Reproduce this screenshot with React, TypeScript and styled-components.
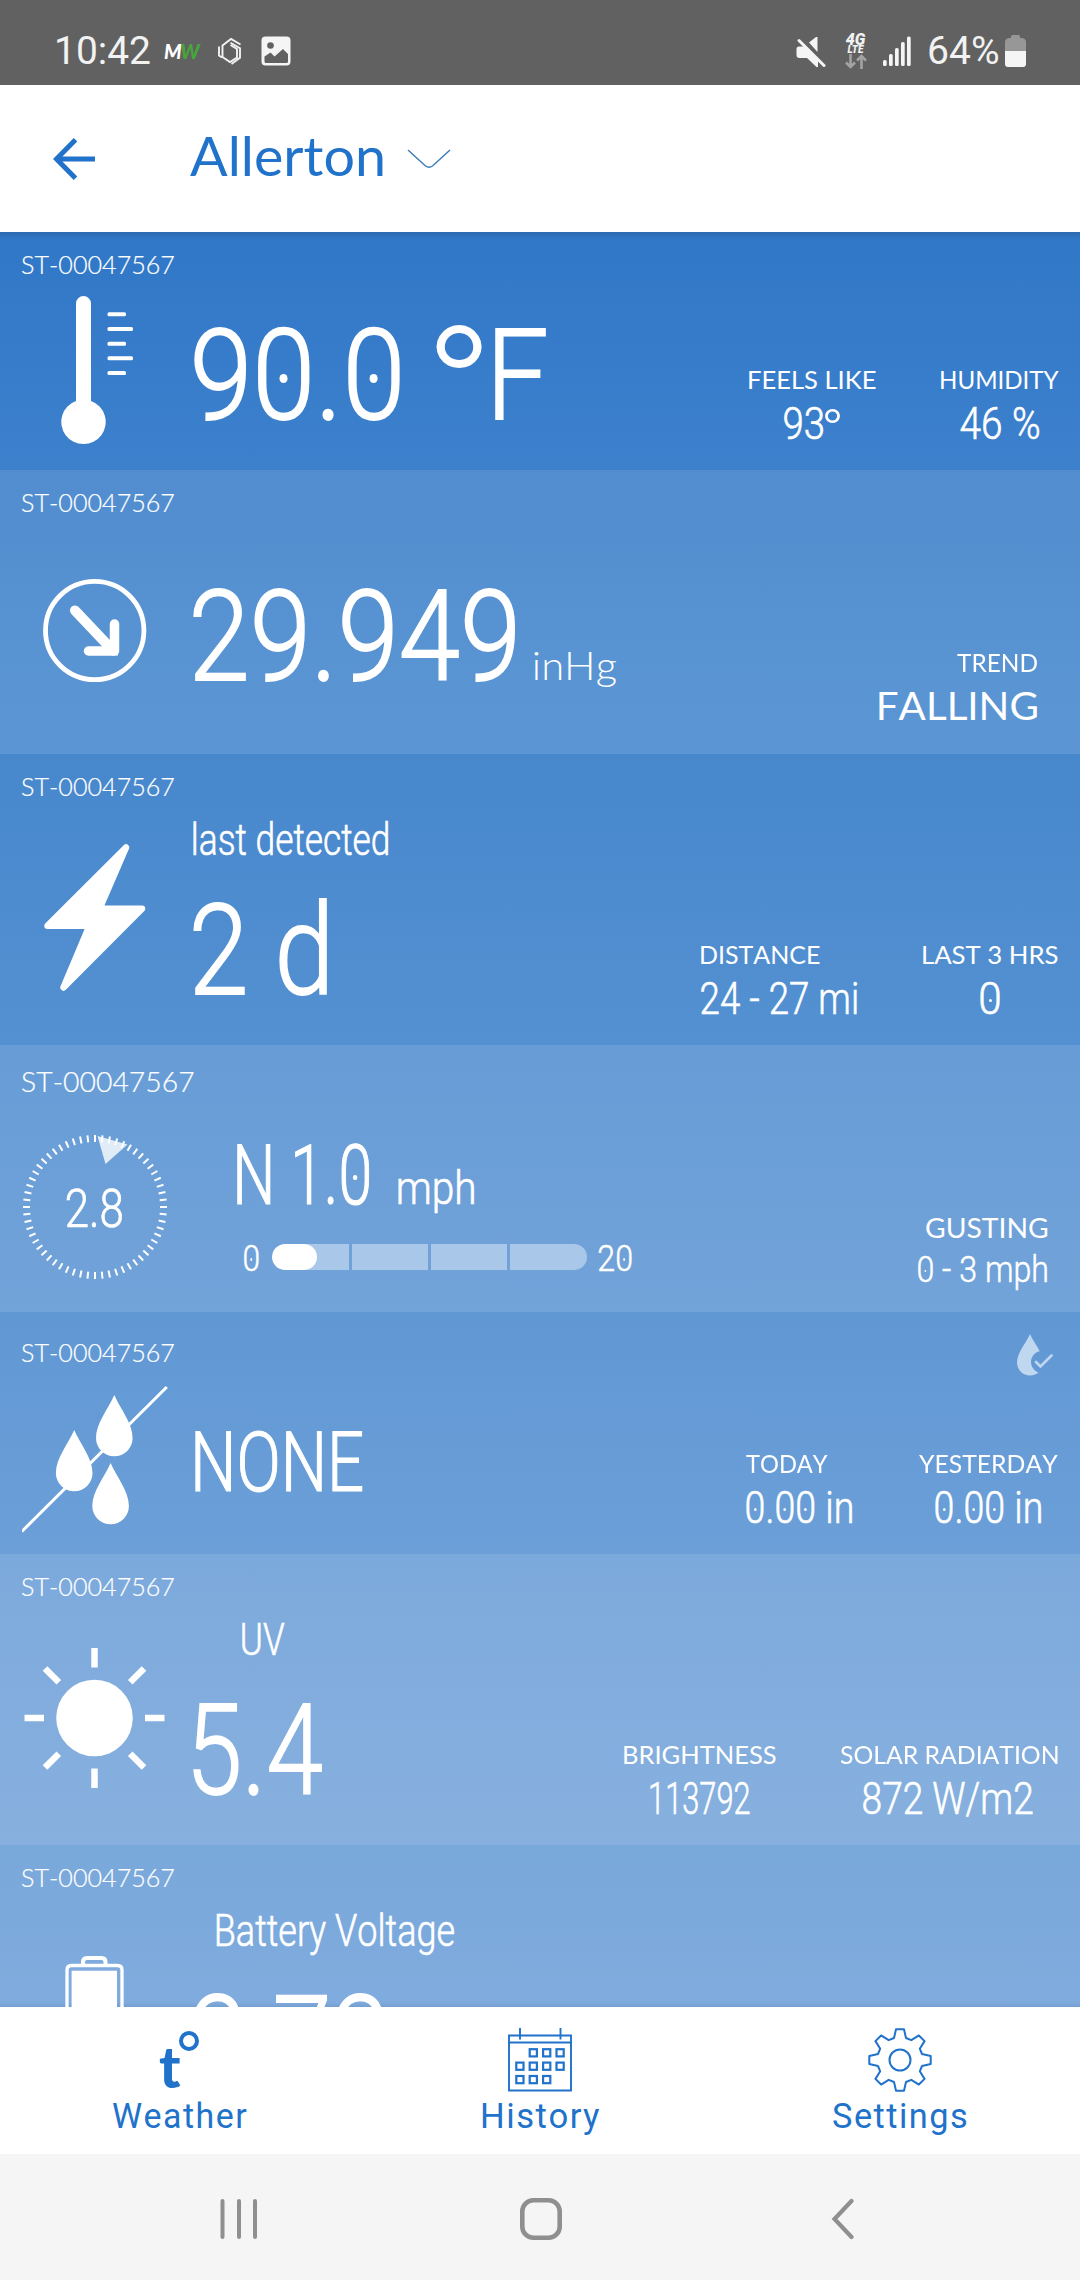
import React, { useLayoutEffect, useState } from 'react';
import styled, { createGlobalStyle } from 'styled-components';

const BLUE = '#2072ca';
const NARROW = "Roboto, 'Liberation Sans', sans-serif";
const WIDE = "Lato, 'Open Sans', 'Liberation Sans', sans-serif";

const GlobalStyle = createGlobalStyle`
  *, *::before, *::after { box-sizing: border-box; }
  body { margin: 0; background: #fff; font-family: ${NARROW}; }
`;

/* ---------- text set to an exact ink width ---------- */

const InkBox = styled.div<{
  $size: number;
  $width: number;
  $weight: number;
  $family: string;
  $color?: string;
  $track: number;
  $swell: number;
}>`
  flex: none;
  width: ${(p) => p.$width}px;
  height: ${(p) => p.$size}px;
  line-height: ${(p) => p.$size}px;
  font-family: ${(p) => p.$family};
  font-size: ${(p) => p.$size}px;
  font-weight: ${(p) => p.$weight};
  letter-spacing: ${(p) => p.$track}px;
  color: ${(p) => p.$color || 'inherit'};
  white-space: nowrap;
  -webkit-text-stroke: ${(p) => p.$swell}em currentColor;
`;

const InkRun = styled.span`
  display: inline-block;
  transform-origin: 0 50%;
  font-kerning: none;
`;

const Zero = styled.span`
  position: relative;
  &::after {
    content: '';
    position: absolute;
    left: 50%;
    top: 50%;
    width: max(0.07em, 2px);
    height: max(0.07em, 2px);
    margin: -0.01em 0 0 -0.035em;
    border-radius: 50%;
    background: currentColor;
  }
`;

type InkProps = {
  text: string;
  width: number;
  size: number;
  weight?: number;
  family?: string;
  color?: string;
  track?: number;
  swell?: number;
  dotted?: boolean;
};

function Ink({ text, width, size, weight = 300, family = NARROW, color, track = 0, swell = 0, dotted }: InkProps) {
  const [fit, setFit] = useState({ scale: 1, shift: 0 });
  useLayoutEffect(() => {
    const ctx = document.createElement('canvas').getContext('2d');
    if (!ctx) return;
    ctx.font = `${weight} ${size}px ${family}`;
    (ctx as any).fontKerning = 'none';
    const m = ctx.measureText(text);
    const edge = (swell * size) / 2;
    const left = -m.actualBoundingBoxLeft - edge;
    const right = m.actualBoundingBoxRight + edge + track * (text.length - 1);
    const scale = width / (right - left);
    setFit({ scale, shift: -left * scale });
  }, [text, width, size, weight, family, track, swell]);
  return (
    <InkBox $size={size} $width={width} $weight={weight} $family={family} $color={color} $track={track} $swell={swell}>
      <InkRun style={{ transform: `translateX(${fit.shift}px) scaleX(${fit.scale})` }}>
        {dotted
          ? text.split('').map((c, i) => (c === '0' ? <Zero key={i}>0</Zero> : c))
          : text}
      </InkRun>
    </InkBox>
  );
}

/* ---------- page frame ---------- */

const Screen = styled.div`
  width: 1080px;
  height: 2280px;
  display: flex;
  flex-direction: column;
  overflow: hidden;
`;

const StatusBar = styled.div`
  flex: none;
  height: 85px;
  padding: 17px 54px 0 57px;
  display: flex;
  align-items: center;
  justify-content: space-between;
  background: #616161;
  color: #f2f2f2;
`;

const StatusGroup = styled.div<{ $gap: number }>`
  display: flex;
  align-items: center;
  gap: ${(p) => p.$gap}px;
`;

const Brand = styled.div`
  width: 37px;
  margin: 0 -2px 0 -5px;
  font: italic 900 20px/22px ${WIDE};
  letter-spacing: -1.5px;
  color: #fff;
  em { color: #46a63c; }
`;

const Network = styled.div`
  width: 23px;
  height: 35px;
  margin-right: -2px;
  display: flex;
  flex-direction: column;
  align-items: center;
  font: italic 900 16px/11px ${NARROW};
  small { font-size: 10px; line-height: 9px; }
`;

const Header = styled.header`
  flex: none;
  height: 147px;
  padding-left: 53px;
  display: flex;
  align-items: center;
  background: #fff;
`;

const TitleSlot = styled.div`
  display: flex;
  align-items: center;
  gap: 25px;
  margin-left: 94.5px;
`;

const Title = styled.div`
  padding-bottom: 7px;
`;

const CardList = styled.main`
  flex: none;
  height: 1775px;
  overflow: hidden;
  color: #fff;
`;

const Card = styled.section<{ $h: number; $from: string; $to: string; $edge?: string }>`
  height: ${(p) => p.$h}px;
  display: flex;
  flex-direction: column;
  background: ${(p) => (p.$edge ? `${p.$edge}, ` : '')}linear-gradient(${(p) => p.$from}, ${(p) => p.$to});
`;

const CardTop = styled.div<{ $pad: number }>`
  flex: none;
  height: 56px;
  padding: ${(p) => p.$pad}px 27px 0 22px;
  display: flex;
  justify-content: space-between;
  align-items: flex-start;
  svg { margin-top: -6px; }
`;

const CardBody = styled.div`
  flex: 1;
  min-height: 0;
  display: flex;
`;

const IconSlot = styled.div<{ $top: number }>`
  flex: none;
  width: 193px;
  padding: ${(p) => p.$top}px 0 0 22px;
  svg { display: block; }
`;

const Reading = styled.div<{ $left?: number }>`
  padding-left: ${(p) => p.$left || 0}px;
  display: flex;
  flex-direction: column;
`;

const Line = styled.div<{ $top: number; $left?: number; $gap?: number; $center?: boolean }>`
  margin-top: ${(p) => p.$top}px;
  padding-left: ${(p) => p.$left || 0}px;
  display: flex;
  align-items: ${(p) => (p.$center ? 'center' : 'baseline')};
  gap: ${(p) => p.$gap || 0}px;
`;

const Degree = styled.div<{ $h: number; $rise: number; $before: number; $after?: number }>`
  height: ${(p) => p.$h}px;
  margin: ${(p) => -p.$rise}px ${(p) => p.$after || 0}px 0 ${(p) => p.$before}px;
  align-self: flex-start;
`;

const Stats = styled.div<{ $right: number; $bottom?: number; $gap?: number }>`
  margin-left: auto;
  padding: 0 ${(p) => p.$right}px ${(p) => p.$bottom || 24}px 0;
  display: flex;
  align-items: flex-end;
  gap: ${(p) => p.$gap || 0}px;
`;

const Stat = styled.div<{ $align?: string }>`
  display: flex;
  flex-direction: column;
  align-items: ${(p) => p.$align || 'center'};
  gap: 11px;
`;

/* ---------- wind gauge and scale ---------- */

const Dial = styled.div`
  position: relative;
  width: 146px;
  height: 146px;
`;

const DialValue = styled.div`
  position: absolute;
  left: 44px;
  top: 49px;
`;

const ScaleBar = styled.div`
  width: 315px;
  height: 26px;
  display: grid;
  grid-template-columns: 77px 76px 76px 77px;
  gap: 3px;
  overflow: hidden;
  border-radius: 13px;
  margin: -3px -2px 0 0;
`;

const Segment = styled.div`
  background: #a9c7e8;
`;

const Fill = styled.div`
  width: 45px;
  height: 26px;
  border-radius: 13px;
  background: #fff;
`;

/* ---------- bottom bars ---------- */

const TabBar = styled.nav`
  flex: none;
  height: 147px;
  display: grid;
  grid-template-columns: repeat(3, 1fr);
  background: #fff;
  color: ${BLUE};
`;

const Tab = styled.div`
  display: flex;
  flex-direction: column;
  align-items: center;
  padding-top: 21px;
  gap: 7px;
  svg { display: block; }
`;

const TempMark = styled.div`
  width: 64px;
  height: 64px;
  padding: 3px 0 0 11px;
  display: flex;
  font: 900 57px/70px ${WIDE};
`;

const Ring = styled.i`
  width: 20px;
  height: 20px;
  margin-left: -2px;
  border: 4px solid ${BLUE};
  border-radius: 50%;
`;

const SystemBar = styled.div`
  flex: 1;
  display: flex;
  align-items: center;
  justify-content: space-between;
  padding: 4px 226px 0 220px;
  background: #f5f5f5;
`;

const HomeSlot = styled.div`
  display: flex;
  margin-right: 7px;
`;

/* ---------- icons ---------- */

const Hexagon = () => (
  <svg width="24" height="28" viewBox="0 0 24 28" fill="none" stroke="#f2f2f2" strokeWidth="1.900">
    <path d="M1 9.500v9l3 2M4.500 20.500V8.500L13 2l9.500 5.500M12.500 5.800l9.500 5.500v9.500L13.500 27M4.500 20l7.500 5 7-4.500V12l-6.500-4" />
  </svg>
);

const Picture = () => (
  <svg width="30" height="30" viewBox="0 0 30 30">
    <rect x=".5" y=".5" width="29" height="29" rx="4" fill="#f5f5f5" />
    <circle cx="9.500" cy="9.500" r="3.300" fill="#616161" />
    <path d="M3.500 20.500l6-4 4 4 8.500-7.500 5 5v7.500a1.500 1.500 0 0 1-1.500 1.500H5A1.500 1.500 0 0 1 3.500 25.500z" fill="#616161" />
  </svg>
);

const Muted = () => (
  <svg width="30" height="31" viewBox="0 0 30 31" fill="#f5f5f5">
    <path d="M3 10.500h5l14 14V31h-1.500L11 22H3.500Q0.500 22 .5 19v-6Q.5 10.500 3 10.500zM13 6.500L20 1h1.500v15z" />
    <path d="M3 4.500L28 29.500" stroke="#f5f5f5" strokeWidth="3" strokeLinecap="round" />
  </svg>
);

const Signal = () => (
  <svg width="28" height="30" viewBox="0 0 28 30" fill="#f5f5f5">
    {[6, 12, 18, 24, 29.500].map((h, i) => (
      <rect key={i} x={i * 6} y={30 - h} width="3.700" height={h} rx="1.500" />
    ))}
  </svg>
);

const PhoneBattery = () => (
  <svg width="21" height="34" viewBox="0 0 21 34">
    <path d="M6 4V2.500Q6 1 7.500 1h6Q15 1 15 2.500V4h2.500Q21 5 21 8v9H0V8Q0 5 3.500 4z" fill="#979797" />
    <path d="M0 17h21v13q0 3-3 3H3q-3 0-3-3z" fill="#f5f5f5" />
  </svg>
);

const Thermometer = () => (
  <svg width="146" height="150" viewBox="22 295 146 150" fill="#fff">
    <path d="M76 303.500a7.500 7.500 0 0 1 15 0V401a22.200 22.200 0 1 1-15 0z" />
    {[314.300, 329, 343.700, 358.300, 373].map((y, i) => (
      <rect key={y} x="107.500" y={y - 2} width={i % 2 ? 25.500 : 18.500} height="4" rx="1.500" />
    ))}
  </svg>
);

const FallingArrow = () => (
  <svg width="146" height="106" viewBox="22 577.500 146 106" fill="none" stroke="#fff">
    <circle cx="94.700" cy="630" r="49.200" strokeWidth="4.800" />
    <path d="M75 610l36 38" strokeWidth="10" strokeLinecap="round" />
    <path d="M114.500 623.500v27M88.500 650.500h26" strokeWidth="9.500" strokeLinecap="round" />
    <path d="M112 651.500h6" strokeWidth="7" />
  </svg>
);

const Bolt = () => (
  <svg width="146" height="150" viewBox="22 843 146 150">
    <path
      d="M126 847.500L99.500 908.700H142L63.500 987.500L89.500 925.700H47.500z"
      fill="#fff"
      stroke="#fff"
      strokeWidth="6.500"
      strokeLinejoin="round"
    />
  </svg>
);

const DialFace = () => (
  <svg width="146" height="146" viewBox="-73 -73 146 146">
    {Array.from({ length: 60 }, (_, i) => (
      <path key={i} d="M0-72v7" stroke="#fff" strokeWidth="2" transform={`rotate(${i * 6})`} />
    ))}
    <path d="M2.500-71L32.500-62.500L10.500-43z" fill="#fff" opacity=".8" />
  </svg>
);

const DROP = 'M0 0C6 14 18.300 28 18.300 43A18.300 18.300 0 0 1-18.300 43C-18.300 28-6 14 0 0z';

const NoRain = () => (
  <svg width="146" height="148" viewBox="22.200 1385 146 148" fill="#fff">
    <path d="M22 1531.500L167 1387" stroke="#fff" strokeWidth="3" />
    <path d={DROP} transform="translate(114.500 1395)" />
    <path d={DROP} transform="translate(74.400 1430)" />
    <path d={DROP} transform="translate(110.800 1463)" />
  </svg>
);

const RainCheck = () => (
  <svg width="36" height="42" viewBox="0 0 36 42">
    <mask id="notch">
      <rect width="36" height="42" fill="#fff" />
      <circle cx="25" cy="28" r="11" fill="#000" />
    </mask>
    <path d="M13 0C17 9 26 19 26 28.500A13 13 0 0 1 0 28.500C0 19 9 9 13 0z" fill="#c0d7f0" mask="url(#notch)" />
    <path d="M19 28l4.500 4.500L34.500 21.500" fill="none" stroke="#c0d7f0" strokeWidth="2.600" strokeLinecap="round" />
  </svg>
);

const Sun = () => (
  <svg width="146" height="146" viewBox="-73 -73 146 146" fill="#fff">
    <circle cx="-.5" r="38.300" />
    {Array.from({ length: 8 }, (_, i) => (
      <path key={i} d="M0-70v19.500" stroke="#fff" strokeWidth="6.500" transform={`translate(-.5) rotate(${i * 45})`} />
    ))}
  </svg>
);

const StationBattery = () => (
  <svg width="146" height="60" viewBox="22 1955 146 60" fill="none" stroke="#fff">
    <path d="M67 2020V1970q0-4.500 4.500-4.500h46q4.500 0 4.500 4.500v50" strokeWidth="3.300" />
    <path d="M83 1965v-3q0-4 4-4h14.500q4 0 4 4v3" strokeWidth="4" />
    <rect x="71.600" y="1970.700" width="45.400" height="60" fill="#fff" stroke="none" />
  </svg>
);

const BackArrow = () => (
  <svg width="42" height="42" viewBox="0 0 42 42" fill="none" stroke={BLUE} strokeWidth="5">
    <path d="M42 21H4M22.500 1.800L3.500 21l19 19.200" />
  </svg>
);

const Chevron = () => (
  <svg width="44" height="20" viewBox="0 0 44 20" fill="none" stroke="#3a7ab8" strokeWidth="1.400">
    <path d="M1 1l17.500 16q3.500 2.500 7 0L43 1" />
  </svg>
);

const Calendar = () => (
  <svg width="64" height="64" viewBox="0 0 64 64" fill="none" stroke={BLUE} strokeWidth="1.900">
    <path d="M1 7.500h62V62.500H1zM1 14.500h62M12 0v11.500M52.500 0v11.500" />
    {[
      [1, 0], [2, 0], [3, 0],
      [0, 1], [1, 1], [2, 1], [3, 1],
      [0, 2], [1, 2], [2, 2],
    ].map(([c, r]) => (
      <rect key={`${c}${r}`} x={8.300 + c * 13.400} y={21.200 + r * 13.400} width="7.200" height="7.200" strokeWidth="2.200" />
    ))}
  </svg>
);

const gearOutline = Array.from({ length: 8 }, (_, i) => {
  const a = (i * Math.PI) / 4;
  return [[-6, -22], [-4, -30.700], [4, -30.700], [6, -22]]
    .map(([x, y]) => `${(x * Math.cos(a) - y * Math.sin(a)).toFixed(2)} ${(x * Math.sin(a) + y * Math.cos(a)).toFixed(2)}`)
    .join('L');
}).join('L');

const Gear = () => (
  <svg width="64" height="64" viewBox="-32 -32 64 64" fill="none" stroke={BLUE} strokeWidth="2" strokeLinejoin="round">
    <path d={`M${gearOutline}z`} />
    <circle r="10.500" />
  </svg>
);

const Recents = () => (
  <svg width="38" height="42" viewBox="0 0 38 42" stroke="#8f8f8f" strokeWidth="4" strokeLinecap="round">
    <path d="M2.500 3v36M19 3v36M35 3v36" />
  </svg>
);

const Home = () => (
  <svg width="42" height="42" viewBox="0 0 42 42" fill="none" stroke="#8f8f8f" strokeWidth="4.600">
    <rect x="2.300" y="2.300" width="37.400" height="37.400" rx="11" />
  </svg>
);

const Back = () => (
  <svg width="23" height="42" viewBox="0 0 23 42" fill="none" stroke="#8f8f8f" strokeWidth="4.200" strokeLinecap="round">
    <path d="M20.500 3L3.500 21l17 18" />
  </svg>
);

/* ---------- composed parts ---------- */

const StationId = ({ size = 25, width = 152.500 }: { size?: number; width?: number }) => (
  <Ink text="ST-00047567" size={size} width={width} family={WIDE} weight={300} swell={0.008} />
);

const Label = ({ text, width, size = 25 }: { text: string; width: number; size?: number }) => (
  <Ink text={text} width={width} size={size} family={WIDE} weight={400} />
);

const Value = ({ text, width, size = 43.500 }: { text: string; width: number; size?: number }) => (
  <Ink text={text} width={width} size={size} swell={0.014} dotted />
);

const BIG = 126;

const TabLabel = ({ text, width }: { text: string; width: number }) => (
  <Ink text={text} width={width} size={34.500} weight={400} track={1.500} />
);

export default function App() {
  return (
    <Screen>
      <GlobalStyle />
      <StatusBar>
        <StatusGroup $gap={19}>
          <Ink text="10:42" width={93} size={39} weight={400} />
          <Brand>M<em>W</em></Brand>
          <Hexagon />
          <Picture />
        </StatusGroup>
        <StatusGroup $gap={18}>
          <Muted />
          <Network>
            4G
            <small>LTE</small>
            <svg width="22" height="15" viewBox="0 0 22 15" fill="none" stroke="#a3a3a3" strokeWidth="2.600">
              <path d="M5.500 0v13M1 8.500l4.500 4.500L10 8.500M16.500 15V2M12 6.500L16.500 2 21 6.500" />
            </svg>
          </Network>
          <Signal />
          <StatusGroup $gap={7}>
            <Ink text="64%" width={69} size={39} weight={400} />
            <PhoneBattery />
          </StatusGroup>
        </StatusGroup>
      </StatusBar>

      <Header>
        <BackArrow />
        <TitleSlot>
          <Title>
            <Ink text="Allerton" width={192.500} size={54.500} family={WIDE} weight={400} color={BLUE} />
          </Title>
          <Chevron />
        </TitleSlot>
      </Header>

      <CardList>
        <Card $h={238} $from="#3077c7" $to="#3d81cd" $edge="linear-gradient(rgba(30,60,100,.22), transparent 7px)">
          <CardTop $pad={19.500}><StationId /></CardTop>
          <CardBody>
            <IconSlot $top={7}><Thermometer /></IconSlot>
            <Reading $left={1}>
              <Line $top={24.500}>
                <Value text="90.0" width={206} size={BIG} />
                <Degree $h={126} $rise={9.500} $before={36} $after={13}>
                  <Ink text="°" width={46} size={177} />
                </Degree>
                <Value text="F" width={51} size={BIG} />
              </Line>
            </Reading>
            <Stats $right={21.500} $gap={65}>
              <Stat>
                <Label text="FEELS LIKE" width={127} />
                <Line $top={0}>
                  <Value text="93" width={39.500} />
                  <Degree $h={43} $rise={1} $before={2}><Ink text="°" width={15} size={58} /></Degree>
                </Line>
              </Stat>
              <Stat><Label text="HUMIDITY" width={118} /><Value text="46 %" width={79} /></Stat>
            </Stats>
          </CardBody>
        </Card>

        <Card $h={284} $from="#518dcf" $to="#5c96d4">
          <CardTop $pad={19.500}><StationId /></CardTop>
          <CardBody>
            <IconSlot $top={51.500}><FallingArrow /></IconSlot>
            <Reading>
              <Line $top={47.500} $gap={19}>
                <Value text="29.949" width={322} size={BIG} />
                <Ink text="inHg" width={82} size={39} family={WIDE} weight={300} />
              </Line>
            </Reading>
            <Stats $right={43.500} $bottom={30}>
              <Stat $align="flex-end"><Label text="TREND" width={80} /><Label text="FALLING" width={158} size={38} /></Stat>
            </Stats>
          </CardBody>
        </Card>

        <Card $h={291} $from="#4787cc" $to="#5491d2">
          <CardTop $pad={19.500}><StationId /></CardTop>
          <CardBody>
            <IconSlot $top={33}><Bolt /></IconSlot>
            <Reading>
              <Line $top={8.500}><Value text="last detected" width={195} /></Line>
              <Line $top={25.500}><Value text="2 d" width={134.500} size={BIG} /></Line>
            </Reading>
            <Stats $right={22.500} $gap={66}>
              <Stat $align="flex-start"><Label text="DISTANCE" width={119} /><Value text="24 - 27 mi" width={156} /></Stat>
              <Stat><Label text="LAST 3 HRS" width={135} /><Value text="0" width={20} /></Stat>
            </Stats>
          </CardBody>
        </Card>

        <Card $h={267} $from="#679cd6" $to="#72a3d9">
          <CardTop $pad={22.500}><StationId size={27} width={172} /></CardTop>
          <CardBody>
            <IconSlot $top={32.500}>
              <Dial>
                <DialFace />
                <DialValue><Value text="2.8" width={56} size={53} /></DialValue>
              </Dial>
            </IconSlot>
            <Reading $left={43.500}>
              <Line $top={33} $gap={29}>
                <Value text="N 1.0" width={132.500} size={83} />
                <Value text="mph" width={76} size={46} />
              </Line>
              <Line $top={23.500} $left={7} $gap={13.500} $center>
                <Value text="0" width={14.500} size={36} />
                <ScaleBar>
                  <Segment><Fill /></Segment>
                  <Segment />
                  <Segment />
                  <Segment />
                </ScaleBar>
                <Value text="20" width={33.500} size={36} />
              </Line>
            </Reading>
            <Stats $right={32.500}>
              <Stat $align="flex-end"><Label text="GUSTING" width={122} size={27} /><Value text="0 - 3 mph" width={129.500} size={36} /></Stat>
            </Stats>
          </CardBody>
        </Card>

        <Card $h={242} $from="#6098d4" $to="#6c9fd8">
          <CardTop $pad={27.500}><StationId /><RainCheck /></CardTop>
          <CardBody>
            <IconSlot $top={17}><NoRain /></IconSlot>
            <Reading $left={2}>
              <Line $top={53}><Value text="NONE" width={168} size={83} /></Line>
            </Reading>
            <Stats $right={22.500} $gap={67}>
              <Stat $align="flex-start"><Label text="TODAY" width={82} /><Value text="0.00 in" width={106} /></Stat>
              <Stat><Label text="YESTERDAY" width={139} /><Value text="0.00 in" width={106} /></Stat>
            </Stats>
          </CardBody>
        </Card>

        <Card $h={291} $from="#7ca9dc" $to="#87b0de">
          <CardTop $pad={19.500}><StationId /></CardTop>
          <CardBody>
            <IconSlot $top={34.500}><Sun /></IconSlot>
            <Reading>
              <Line $top={8.500} $left={49}><Value text="UV" width={43} /></Line>
              <Line $top={25.500}><Value text="5.4" width={129} size={BIG} /></Line>
            </Reading>
            <Stats $right={23} $gap={64}>
              <Stat><Label text="BRIGHTNESS" width={152} /><Value text="113792" width={100} /></Stat>
              <Stat><Label text="SOLAR RADIATION" width={217.500} /><Value text="872 W/m2" width={170} /></Stat>
            </Stats>
          </CardBody>
        </Card>

        <Card $h={162} $from="#79a8da" $to="#80abde" $edge="linear-gradient(transparent 157px, rgba(60,90,130,.14))">
          <CardTop $pad={19.500}><StationId /></CardTop>
          <CardBody>
            <IconSlot $top={54}><StationBattery /></IconSlot>
            <Reading>
              <Line $top={8.500} $left={23}><Value text="Battery Voltage" width={238} /></Line>
              <Line $top={25.500}><Value text="2.72" width={194} size={BIG} /></Line>
            </Reading>
          </CardBody>
        </Card>
      </CardList>

      <TabBar>
        <Tab>
          <TempMark>t<Ring /></TempMark>
          <TabLabel text="Weather" width={134} />
        </Tab>
        <Tab>
          <Calendar />
          <TabLabel text="History" width={117} />
        </Tab>
        <Tab>
          <Gear />
          <TabLabel text="Settings" width={134} />
        </Tab>
      </TabBar>

      <SystemBar>
        <Recents />
        <HomeSlot><Home /></HomeSlot>
        <Back />
      </SystemBar>
    </Screen>
  );
}
